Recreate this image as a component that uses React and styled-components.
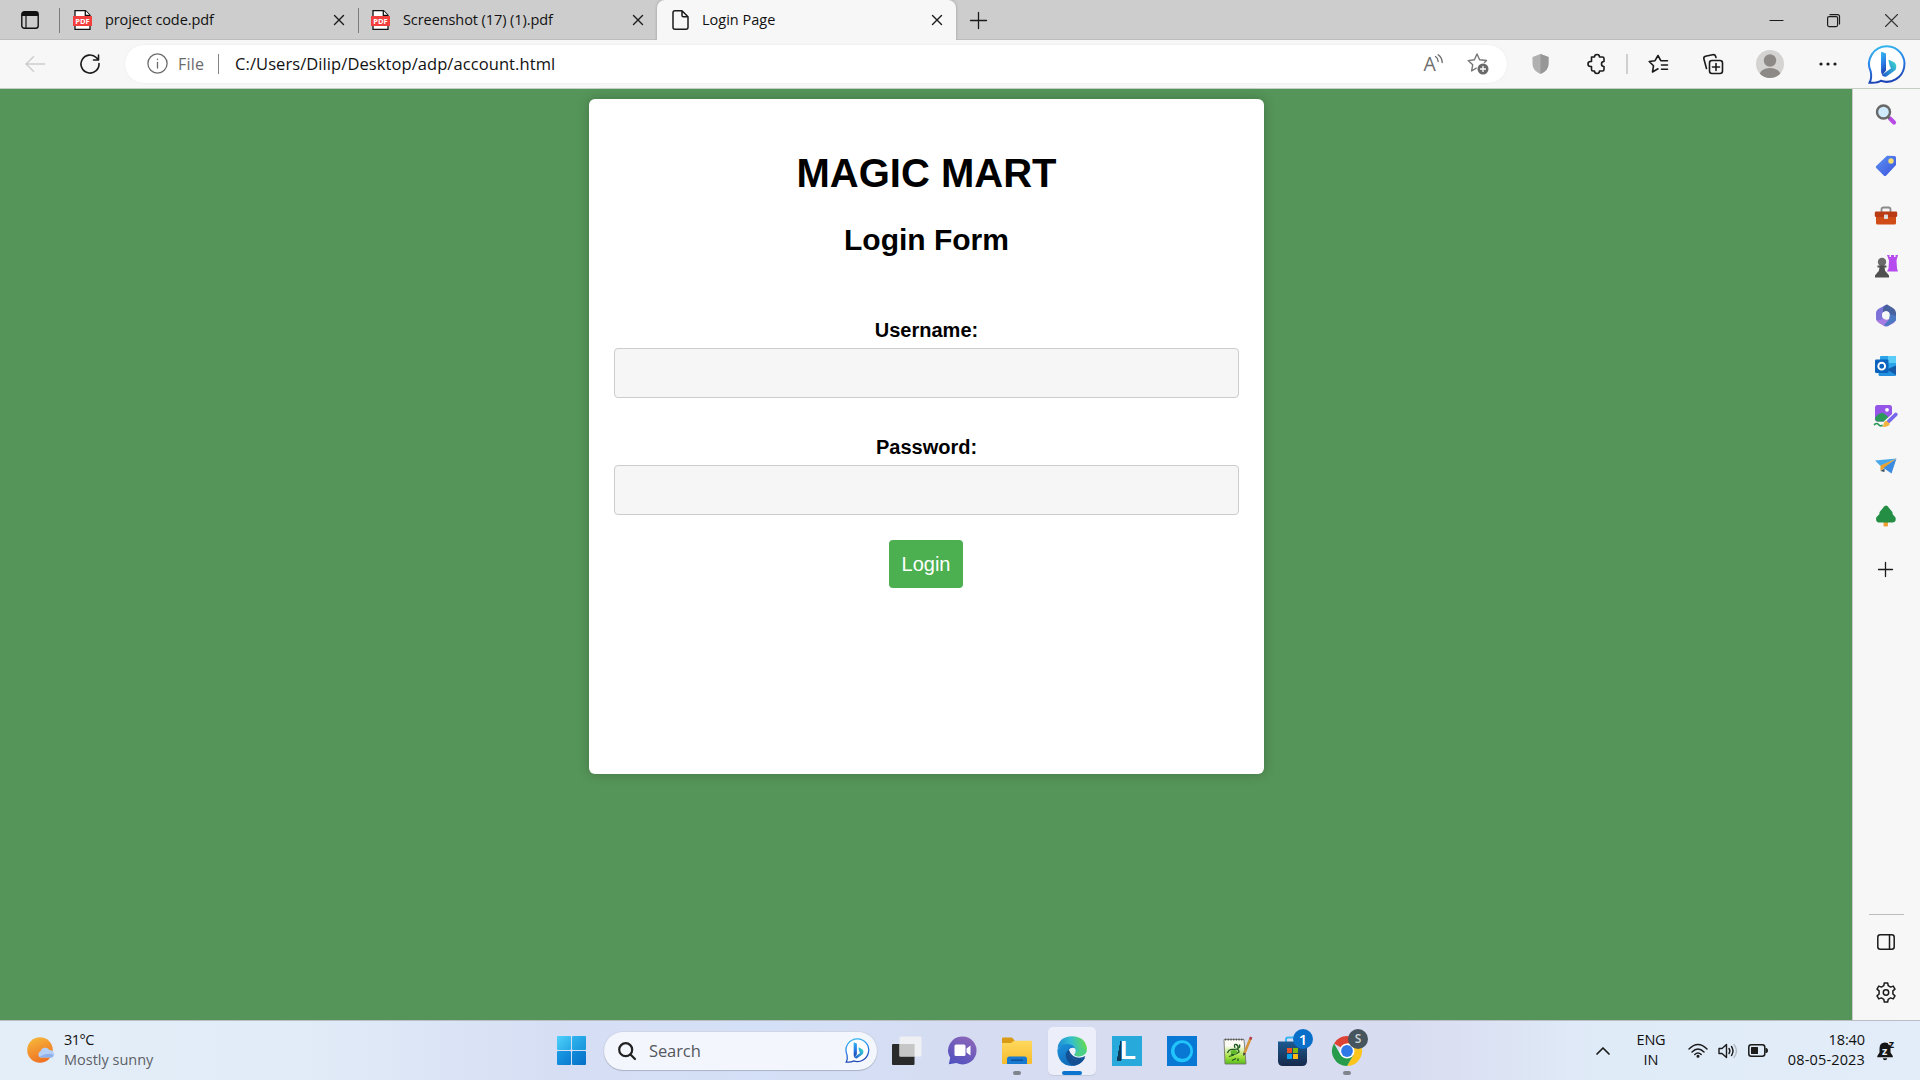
import React from "react";
import styled, { createGlobalStyle, css } from "styled-components";

const Global = createGlobalStyle`
  * { box-sizing: border-box; }
  html, body { margin: 0; padding: 0; overflow: hidden; }
  body { font-family: "Open Sans", "Noto Sans", sans-serif; color: #111; }
  svg { display: block; flex: none; overflow: visible; }
  button, input { font: inherit; }
`;

const Desktop = styled.div`
  width: 1920px;
  height: 1080px;
  display: flex;
  flex-direction: column;
  overflow: hidden;
  background: #f7f7f7;
`;

const Cell = styled.div`
  flex: none;
  width: ${(p) => (p.$w ? `${p.$w}px` : "100%")};
  height: ${(p) => (p.$h ? `${p.$h}px` : "100%")};
  display: flex;
  align-items: center;
  justify-content: center;
`;

const Spacer = styled.div`
  flex: 1;
`;

const Label = styled.span`
  white-space: nowrap;
  font-size: ${(p) => p.$size}px;
  letter-spacing: ${(p) => p.$track || 0}px;
  color: ${(p) => p.$color || "#111"};
  line-height: 20px;
`;

/* ---------- tab strip ---------- */

const TabStrip = styled.header`
  height: 40px;
  flex: none;
  display: flex;
  background: #cdcdcd;
  box-shadow: inset 0 -1px 0 #bdbdbd;
`;

const TabRule = styled.div`
  width: 1px;
  height: 25px;
  margin-top: 8px;
  background: #7c7c7c;
`;

const Tab = styled.div`
  width: ${(p) => p.$w}px;
  padding-left: ${(p) => p.$pad}px;
  display: flex;
  align-items: center;
  gap: 13px;
  ${(p) =>
    p.$active &&
    css`
      background: #f7f7f7;
      border-radius: 8px 8px 0 0;
      box-shadow: 0 0 3px rgba(0, 0, 0, 0.25);
      clip-path: inset(0 -3px 0 -3px);
    `}
`;

const PdfBox = styled.div`
  position: relative;
  width: 19px;
  height: 20px;
`;

const PdfTag = styled.span`
  position: absolute;
  left: 0;
  top: 6px;
  width: 19px;
  height: 10px;
  background: #f2403f;
  color: #fff;
  font: bold 7.5px/10px "Open Sans", sans-serif;
  text-align: center;
`;

/* ---------- toolbar ---------- */

const Toolbar = styled.nav`
  height: 49px;
  flex: none;
  display: flex;
  align-items: center;
  background: #f7f7f7;
  border-bottom: 1px solid #c3cfc3;
`;

const AddressBar = styled.div`
  width: 1382px;
  height: 38px;
  margin-left: 14px;
  margin-bottom: 1px;
  padding-left: 22px;
  display: flex;
  align-items: center;
  background: #fff;
  border-radius: 19px;
  box-shadow: 0 0 2px rgba(0, 0, 0, 0.08);
`;

const FileLabel = styled(Label)`
  width: 40px;
  margin-left: 10px;
`;

const Rule = styled.div`
  width: ${(p) => p.$w || 1}px;
  height: 20px;
  background: ${(p) => p.$color};
`;

const Url = styled(Label)`
  margin-left: 16px;
`;

/* ---------- page ---------- */

const Main = styled.div`
  height: 931px;
  flex: none;
  display: flex;
`;

const Page = styled.main`
  width: 1852px;
  padding-top: 10px;
  display: flex;
  justify-content: center;
  align-items: flex-start;
  background: #559559;
`;

const Card = styled.form`
  width: 675px;
  height: 675px;
  margin-left: 1px;
  padding: 51px 25px 0;
  display: flex;
  flex-direction: column;
  align-items: center;
  background: #fff;
  border-radius: 6px;
  box-shadow: 0 0 12px rgba(0, 0, 0, 0.22);
  font-family: "Liberation Sans", Arial, sans-serif;
  color: #000;
`;

const Brand = styled.h1`
  margin: 0 0 27px;
  font-size: 40px;
  line-height: 46px;
`;

const Title = styled.h2`
  margin: 0 0 62px;
  font-size: 30px;
  line-height: 34px;
`;

const Field = styled.label`
  width: 100%;
  margin-bottom: ${(p) => p.$after}px;
  display: flex;
  flex-direction: column;
  align-items: center;
  gap: 6px;
  font-size: 20px;
  line-height: 23px;
  font-weight: bold;
`;

const TextInput = styled.input`
  width: 100%;
  height: 50px;
  border: 1px solid #ccc;
  border-radius: 4px;
  background: #f6f6f6;
  outline: none;
`;

const Submit = styled.button`
  width: 74px;
  height: 48px;
  margin-right: 1px;
  padding: 0;
  border: 0;
  border-radius: 4px;
  background: #4caf50;
  color: #fff;
  font-size: 20px;
`;

/* ---------- sidebar ---------- */

const Sidebar = styled.aside`
  width: 68px;
  display: flex;
  flex-direction: column;
  align-items: center;
  background: #f7f7f7;
  border-left: 1px solid #c9ccc9;
  padding: 0 2px 4px 0;
`;

const SideRule = styled.div`
  width: 35px;
  height: 1px;
  margin-left: 1px;
  background: #bcbcbc;
`;

/* ---------- taskbar ---------- */

const Taskbar = styled.footer`
  height: 60px;
  flex: none;
  display: flex;
  align-items: center;
  border-top: 1px solid #b9bdc4;
  background: linear-gradient(90deg, #e3eef8 0, #e2ecf8 300px, #d6def4 560px, #d4e0f7 760px, #d6dcf1 1000px, #d8dcf0 1400px, #e0ebf8 1600px, #e2edf9 1920px);
`;

const Weather = styled.div`
  width: 557px;
  padding-left: 27px;
  display: flex;
  align-items: center;
  gap: 9px;
`;

const Stack = styled.div`
  width: ${(p) => (p.$w ? `${p.$w}px` : "auto")};
  margin-bottom: 2px;
  display: flex;
  flex-direction: column;
  align-items: ${(p) => p.$align || "flex-start"};
`;

const StartButton = styled.div`
  width: 29px;
  height: 29px;
  margin-right: 18px;
  display: grid;
  grid-template-columns: 1fr 1fr;
  gap: 1px;
`;

const Pane = styled.i`
  border-radius: 1px;
  background: ${(p) => p.$fill};
`;

const SearchBox = styled.div`
  width: 273px;
  height: 38px;
  padding: 0 7px 0 14px;
  display: flex;
  align-items: center;
  background: #f3f6fd;
  border-radius: 19px;
  box-shadow: 0 1px 1px #aab3c6, 0 0 0 1px #cfd6e8;
`;

const SearchText = styled(Label)`
  flex: 1;
  margin-left: 13px;
`;

const AppSlot = styled.div`
  position: relative;
  width: 48px;
  height: 48px;
  margin-right: 7px;
  display: flex;
  align-items: center;
  justify-content: center;
  border-radius: 5px;
  ${(p) =>
    p.$active &&
    css`
      background: #eceff9;
      box-shadow: 0 1px 1px #c3c9da;
    `}
`;

const Running = styled.i`
  position: absolute;
  bottom: 0;
  left: 50%;
  width: ${(p) => p.$w}px;
  height: 4px;
  margin-left: ${(p) => -p.$w / 2}px;
  border-radius: 2px;
  background: ${(p) => p.$color};
`;

const Badge = styled.span`
  position: absolute;
  right: 3px;
  top: 2px;
  width: 20px;
  height: 20px;
  border-radius: 50%;
  background: ${(p) => p.$bg};
  color: ${(p) => p.$color};
  font-size: ${(p) => p.$size}px;
  font-weight: 600;
  line-height: 20px;
  text-align: center;
`;

const LTile = styled.div`
  width: 30px;
  height: 30px;
  background: linear-gradient(100deg, transparent 0 20%, #0d3b57 21% 38%, transparent 39%) 3px 5px / 22px 20px no-repeat, #27a9dc;
  color: #fff;
  font: bold 26px/28px "Liberation Sans", sans-serif;
  text-align: center;
  padding-left: 2px;
`;

const DateStack = styled(Stack)`
  margin-left: 8px;
`;

/* ---------- icons ---------- */

const Line = ({ w, h, sw = 1.5, c = "#1b1b1b", children, vb }) => (
  <svg width={w} height={h} viewBox={vb || `0 0 ${w} ${h}`} fill="none" stroke={c} strokeWidth={sw} strokeLinecap="round" strokeLinejoin="round">
    {children}
  </svg>
);

const CloseIcon = ({ s = 10, sw = 1.4, c }) => (
  <Line w={s} h={s} sw={sw} c={c}>
    <path d={`M.5 .5 ${s - 0.5} ${s - 0.5}M${s - 0.5} .5 .5 ${s - 0.5}`} />
  </Line>
);

const PdfIcon = () => (
  <PdfBox>
    <svg width="19" height="20" fill="#fff" stroke="#111" strokeWidth="1.3">
      <path d="M2 .7H12.5L17 5.2V19.3H2Z" />
      <path d="M12.3 .7V5.4H17" />
    </svg>
    <PdfTag>PDF</PdfTag>
  </PdfBox>
);

const BingIcon = ({ w, h, id }) => (
  <svg width={w} height={h} viewBox="0 0 38 39">
    <defs>
      <linearGradient id={id} x1="0" y1="0" x2="0.2" y2="1">
        <stop offset="0" stopColor="#35bdf0" />
        <stop offset=".55" stopColor="#2a7fe6" />
        <stop offset="1" stopColor="#1c44b4" />
      </linearGradient>
      <linearGradient id={`${id}b`} x1="0" y1="1" x2="1" y2="0">
        <stop offset="0" stopColor="#1f55d0" />
        <stop offset="1" stopColor="#3fe0d0" />
      </linearGradient>
    </defs>
    <path d="M19 1.2A17.8 17.8 0 1 1 12.8 35.8C10.500 37.500 6 38 1.500 37.700C3 35 3.600 31 2.700 26.500A17.800 17.800 0 0 1 19 1.200Z" fill="#fff" stroke={`url(#${id})`} strokeWidth="2" />
    <path d="M13 7.500Q13 6.500 14 6.900L17 8Q18 8.400 18 9.500V25.500L14.300 30Q13 28.500 13 26Z" fill={`url(#${id})`} />
    <path d="M20.500 15.500Q20.500 14.500 21.500 15L26.500 17.500Q29.500 20 27.500 25L18.500 31.500Q15.500 32.500 13.800 30L23 23.300Q21 20 20.500 15.500Z" fill={`url(#${id}b)`} />
  </svg>
);

const ReadAloudIcon = () => (
  <svg width="20" height="20" viewBox="0 0 20 20" fill="none" stroke="#6e6e6e" strokeWidth="1.4" strokeLinecap="round">
    <text x="-.5" y="17" fill="#6e6e6e" stroke="none" fontSize="19.500" fontFamily="Open Sans, sans-serif">A</text>
    <path d="M11.500 2.500Q14 4 14.200 7.500M14.200 .8Q18 3.500 18.200 8.500" />
  </svg>
);

const AddFavouriteIcon = () => (
  <svg width="22" height="22" viewBox="0 0 22 22">
    <path d="M9.200 15.200 4.600 18 5.700 11.800 1.200 7.600 7.400 6.700 10 1 12.600 6.700 19.500 7.500 17.500 9.500" fill="none" stroke="#767676" strokeWidth="1.400" strokeLinejoin="round" strokeLinecap="round" />
    <circle cx="16" cy="16" r="5.500" fill="#6a6a6a" />
    <path d="M13 16H19M16 13V19" stroke="#fff" strokeWidth="1.300" />
  </svg>
);

const SearchColorIcon = () => (
  <svg width="22" height="22" viewBox="0 0 22 22">
    <path d="M15 14.500 19 18.500" stroke="#b84be6" strokeWidth="4.200" strokeLinecap="round" />
    <path d="M12.500 12.500 14.500 14.500" stroke="#686868" strokeWidth="2.200" />
    <circle cx="8.500" cy="8" r="6.500" fill="#cfeafc" stroke="#686868" strokeWidth="2.400" />
  </svg>
);

const TagIcon = () => (
  <svg width="22" height="22" viewBox="0 0 22 22">
    <defs>
      <linearGradient id="tag" x1="0" y1="0" x2="1" y2="1">
        <stop offset="0" stopColor="#5c95f3" />
        <stop offset="1" stopColor="#3c51dc" />
      </linearGradient>
    </defs>
    <path d="M12 .8 19.500 1Q21 1 21 2.500V10L11 20.700Q10 21.500 9 20.700L1.200 13Q.3 12 1.200 11Z" fill="url(#tag)" />
    <circle cx="16" cy="6" r="2.700" fill="#f7dc70" />
  </svg>
);

const ToolboxIcon = () => (
  <svg width="24" height="20" viewBox="0 0 24 20">
    <path d="M7.500 6V3.500Q7.500 1.500 9.500 1.500H14.500Q16.500 1.500 16.500 3.500V6" fill="none" stroke="#8a8a8a" strokeWidth="1.800" />
    <path d="M2 9H22V17Q22 18.500 20.500 18.500H3.500Q2 18.500 2 17Z" fill="#d14d17" />
    <rect x=".8" y="5.500" width="22.400" height="5.500" rx="1.300" fill="#b93c14" />
    <rect x="10" y="8.500" width="4" height="4.500" rx=".8" fill="#ddd" />
  </svg>
);

const GamesIcon = () => (
  <svg width="24" height="24" viewBox="0 0 24 24">
    <path d="M13 1H15.500V3H17V1H20V3H21.500V1H24L22.500 6.500 23 14.500 24 17.500H13L14.500 14.500 15 6.500Z" fill="#b64cf0" />
    <circle cx="8" cy="8" r="4.200" fill="#6a6a6a" />
    <path d="M3.500 11.500H12.500V13.500H10.500Q10.500 17 13 19L15 21.500V23.500H1V21.500L3 19Q5.500 17 5.500 13.500H3.500Z" fill="#505050" />
  </svg>
);

const OfficeIcon = () => (
  <svg width="22" height="23" viewBox="0 0 22 23">
    <path d="M12 .5 5 4Q1 6 1 9V14.500Q1 17 4 18L9 15Q7 14 7 11Q7 8 10 7L16 4Z" fill="#7d72d8" />
    <path d="M12 .5 18 4Q21 6 21 8.500V15Q21 17 19 18L14.500 15V10Q14.500 7.500 11 7L8 8V4Q8 2 12 .5Z" fill="#48619f" />
    <path d="M2 16.500 9 14.800Q12 17 14.500 14.500L20.500 16.500Q20 18.500 17 20L13 22Q11 23 9 22L4 19Q2.500 18 2 16.500Z" fill="#a77be2" />
    <path d="M14.500 15V10L21 12V15Q21 17 19 18L13 22Q10 22.500 9 21Z" fill="#4c79c4" />
    <circle cx="11" cy="11.200" r="3.700" fill="#f7f7f7" />
  </svg>
);

const OutlookIcon = () => (
  <svg width="22" height="22" viewBox="0 0 22 22">
    <rect x="5" y="1" width="16" height="15" rx="1" fill="#2aa3e8" />
    <path d="M13 1H20Q21 1 21 2V8H13Z" fill="#58ccf6" />
    <path d="M3.500 15 12 14 21 10.500V20Q21 21 20 21H5Q3.500 21 3.500 19.500Z" fill="#2590df" />
    <path d="M12 14.500 21 10.500V20Z" fill="#145aa8" />
    <rect x="0" y="4.500" width="13.500" height="13.500" rx="1.300" fill="#0b63bd" />
    <circle cx="6.700" cy="11.200" r="3.400" fill="none" stroke="#fff" strokeWidth="1.900" />
  </svg>
);

const DesignerIcon = () => (
  <svg width="25" height="24" viewBox="0 0 25 24">
    <rect x="2" y="1" width="17" height="16.500" rx="2.500" fill="#9456e6" />
    <circle cx="14" cy="5.800" r="1.900" fill="#fff" />
    <path d="M2 14Q8 6 13 11L16 14V17.500H4Q2 17 2 14Z" fill="#2b9a59" />
    <path d="M1.500 20.500Q4 18.500 5.500 20.500T9 21.500" stroke="#2b9a59" strokeWidth="1.700" fill="none" strokeLinecap="round" />
    <path d="M23 10.500 14 18.500" stroke="#f7f7f7" strokeWidth="6" strokeLinecap="round" />
    <path d="M22.800 10.500 15.500 17.500" stroke="#7668ea" strokeWidth="3.800" strokeLinecap="round" />
    <path d="M13.200 16.500 17 20Q15 23.500 9 23Q11 22 10.500 20Q11 17.500 13.200 16.500Z" fill="#f2b53d" />
  </svg>
);

const DropIcon = () => (
  <svg width="22" height="16" viewBox="0 0 22 16">
    <path d="M0 2.500 21.500 .5 5.500 8Z" fill="#49a8ec" />
    <path d="M21.500 .5 5.500 7.500V13L8 11Z" fill="#e9a12f" />
    <path d="M5.500 13 9.500 10.500V14Z" fill="#354d63" />
    <path d="M21.500 .5 8.500 10 16.500 15.500Z" fill="#3d8be0" />
  </svg>
);

const TreeIcon = () => (
  <svg width="22" height="22" viewBox="0 0 22 22">
    <path d="M8.500 15H13V20.500Q13 21.500 12 21.500H9.500Q8.500 21.500 8.500 20.500Z" fill="#eda132" />
    <path d="M11 .5Q13 .5 14 3L17 6.500Q18 8 17.500 9L20.500 12.500Q21.500 17 18 17.500H4Q.5 17 1.200 12.500L4.500 9Q4 8 5 6.500L8 3Q9 .5 11 .5Z" fill="#248e44" />
  </svg>
);

const GearIcon = () => (
  <Line w={20} h={21} sw={1.500}>
    <path d="M8.300 1H11.700L12.200 3.700 14.600 5.100 17.200 4.100 19 7.100 16.900 8.900V12L19 13.900 17.200 16.900 14.600 15.900 12.200 17.300 11.700 20H8.300L7.800 17.300 5.400 15.900 2.800 16.900 1 13.900 3.100 12V8.900L1 7.100 2.800 4.100 5.400 5.100 7.800 3.700Z" />
    <circle cx="10" cy="10.500" r="2.700" />
  </Line>
);

const SunIcon = () => (
  <svg width="28" height="28" viewBox="0 0 28 28">
    <defs>
      <linearGradient id="sun" x1=".3" y1="0" x2=".7" y2="1">
        <stop offset="0" stopColor="#f6b53a" />
        <stop offset="1" stopColor="#ee6c22" />
      </linearGradient>
    </defs>
    <circle cx="13" cy="13" r="12.800" fill="url(#sun)" />
    <path d="M13.500 20.500A3.300 3.300 0 0 1 13.500 14.300A5 5 0 0 1 22.500 13Q26 13 27 16Q28 19.500 25 20.500Z" fill="#b7d0f7" />
    <path d="M13 19.500Q19 15.500 26.500 17.500Q26 20.500 24.500 20.500H13.500Z" fill="#8fb2ec" />
  </svg>
);

const TaskViewIcon = () => (
  <svg width="30" height="29" viewBox="0 0 30 29">
    <rect x="0" y="8" width="22.500" height="21" rx="1" fill="#2a2a2a" />
    <rect x="7.500" y=".5" width="22" height="20" rx="1" fill="#f1f1f3" fillOpacity=".92" />
    <rect x="7.500" y="8" width="15" height="12.500" fill="#c6c6c6" />
  </svg>
);

const ChatIcon = () => (
  <svg width="29" height="29" viewBox="0 0 29 29">
    <defs>
      <linearGradient id="chat" x1="0" y1="1" x2=".6" y2="0">
        <stop offset="0" stopColor="#4c4fc0" />
        <stop offset="1" stopColor="#8865b8" />
      </linearGradient>
    </defs>
    <path d="M14.500 .5A14 14 0 1 1 8.500 27.100L.8 28.200 2.200 21.800A14 14 0 0 1 14.500 .5Z" fill="url(#chat)" />
    <rect x="6.500" y="8.500" width="11" height="11.500" rx="1.500" fill="#fff" />
    <path d="M18.500 12.500 22.500 9.500V19.500L18.500 16.500Z" fill="#fff" />
  </svg>
);

const FolderIcon = () => (
  <svg width="30" height="28" viewBox="0 0 30 28">
    <defs>
      <linearGradient id="folder" x1="0" y1="0" x2="0" y2="1">
        <stop offset="0" stopColor="#ffd95e" />
        <stop offset="1" stopColor="#f6bb2c" />
      </linearGradient>
    </defs>
    <path d="M0 1.500Q0 .5 1 .5H10L13 4V8H0Z" fill="#d99a16" />
    <path d="M0 6H9L12 3.700H29Q30 3.700 30 4.700V26Q30 27 29 27H1Q0 27 0 26Z" fill="url(#folder)" />
    <path d="M5 27V22Q5 19.500 7.500 19.500H22.500Q25 19.500 25 22V27Z" fill="#1779cf" />
    <path d="M9 23.200H21" stroke="#0b4c94" strokeWidth="1.400" />
  </svg>
);

const EdgeIcon = () => (
  <svg width="30" height="30" viewBox="0 0 30 30">
    <defs>
      <linearGradient id="e1" x1="0" y1=".6" x2="1" y2=".4">
        <stop offset="0" stopColor="#1b86d2" />
        <stop offset=".5" stopColor="#32bdd2" />
        <stop offset="1" stopColor="#66dc4a" />
      </linearGradient>
      <linearGradient id="e2" x1="0" y1="0" x2=".7" y2="1">
        <stop offset="0" stopColor="#1b94dd" />
        <stop offset="1" stopColor="#1163b2" />
      </linearGradient>
    </defs>
    <path d="M.5 13Q1.500 .5 15 .2Q28.500 .8 30 12.500Q30 20 22 20.500Q17.500 20.500 17 18.500Q19 17 18.500 14Q17 9 10.500 9Q3 9 .5 13Z" fill="url(#e1)" />
    <path d="M.3 14Q3 7.500 10.500 8Q17 8.500 18.500 13Q14 10.500 12 14Q9.500 20 15 24.500Q20 28 27.500 22.500Q23 30 14.500 30Q1 29 .3 14Z" fill="url(#e2)" />
    <path d="M12 13.500Q8 16 9 21Q10.500 27.500 17 29.800Q24 28.500 28 22Q22 25 17 22.500Q11.500 19.500 12 13.500Z" fill="#124f93" />
    <path d="M12 14Q14 10.800 17.500 12Q19.500 14.500 17 18.500Q17.500 20.500 22 20.500L27 18Q29 19 28 21.500Q24 25.500 17.500 23Q11.500 20 12 14Z" fill="#eceff9" fillOpacity=".95" stroke="none" />
    <path d="M17 23Q11 20 12 14Q14 19.500 19 21.300Q24 22.500 28.300 20Q28 23 25 24Q21 25 17 23Z" fill="#124f93" />
    <path d="M18 17.500Q17 20.500 22 20.500Q28 20 29.500 15L26 12Z" fill="#4ccf86" />
  </svg>
);

const AlexaIcon = () => (
  <svg width="30" height="30" viewBox="0 0 30 30">
    <rect width="30" height="30" fill="#0878d4" />
    <path d="M15 25.500V23.500A8.600 8.600 0 1 0 12 22.800Q15 23.500 15 25.500A10.300 10.300 0 0 1 15 4.900A10.300 10.300 0 0 1 15 25.500Z" fill="#22c5fb" stroke="#22c5fb" strokeWidth="1.400" />
  </svg>
);

const NotepadIcon = () => (
  <svg width="30" height="30" viewBox="0 0 30 30">
    <defs>
      <linearGradient id="np" x1="0" y1="0" x2="0" y2="1">
        <stop offset=".25" stopColor="#fbfbf4" />
        <stop offset=".7" stopColor="#a6e040" />
        <stop offset="1" stopColor="#55bd1b" />
      </linearGradient>
    </defs>
    <path d="M2 3.500H22L24 28H3Z" fill="url(#np)" stroke="#77796d" strokeWidth=".9" />
    <path d="M3 3.500H22" stroke="#555" strokeWidth="2.200" strokeDasharray="1.200 1.500" />
    <path d="M5.500 17Q7 12.500 12 13.500Q17 12 17 16Q14 19 9 18M7 20.500 12 19M13 12Q11.500 8 14 8.500T16 12.500Q18.500 11 17.500 8.500M10 24.500 14 22.500M16 25V22.500" fill="none" stroke="#1e5b20" strokeWidth="1.300" />
    <ellipse cx="12" cy="16" rx="3.500" ry="2" fill="#63b92c" />
    <path d="M28.500 2.500 22.500 17" stroke="#d5953c" strokeWidth="2.600" />
    <path d="M29.200 1 28.200 3.500" stroke="#b3414b" strokeWidth="2.600" />
    <path d="M21.300 16.500 23.700 17.500 21.300 20.300Z" fill="#333" />
  </svg>
);

const StoreIcon = () => (
  <svg width="29" height="30" viewBox="0 0 29 30">
    <defs>
      <linearGradient id="store" x1="0" y1="0" x2="0" y2="1">
        <stop offset="0" stopColor="#1d5a92" />
        <stop offset="1" stopColor="#16294a" />
      </linearGradient>
    </defs>
    <path d="M8 6V3.500Q8 1.500 10 1.500H19Q21 1.500 21 3.500V6" fill="none" stroke="#39b5f0" strokeWidth="2" />
    <path d="M0 5.500H29V25Q29 30 24 30H5Q0 30 0 25Z" fill="url(#store)" />
    <rect x="9" y="12" width="5" height="5" fill="#ef5326" />
    <rect x="15" y="12" width="5" height="5" fill="#80bb0a" />
    <rect x="9" y="18" width="5" height="5" fill="#08a5ee" />
    <rect x="15" y="18" width="5" height="5" fill="#fdb913" />
  </svg>
);

const ChromeIcon = () => (
  <svg width="30" height="30" viewBox="0 0 30 30">
    <path d="M15 15 2 7.500A15 15 0 0 1 28 7.500H15Z" fill="#dc4334" />
    <path d="M15 7.500H28A15 15 0 0 1 15 30L21.500 18.800Z" fill="#fbc51d" />
    <path d="M21.500 18.800 15 30A15 15 0 0 1 2 7.500L8.500 18.800Z" fill="#259b4b" />
    <circle cx="15" cy="15" r="7.500" fill="#fff" />
    <circle cx="15" cy="15" r="5.900" fill="#2f78e8" />
  </svg>
);

const BellIcon = () => (
  <svg width="18" height="20" viewBox="0 0 18 20">
    <path d="M8 1.500Q13.500 1.500 13.500 7.500V11.500L15.800 15V16.200H.3V15L2.500 11.500V7.500Q2.500 1.500 8 1.500Z" fill="#151515" />
    <path d="M5.800 17.300H10.200Q10 19.300 8 19.300T5.800 17.300Z" fill="#151515" />
    <path d="M11 0H18V7H13V3.500H11Z" fill="#e2edf9" />
    <text x="5" y="13.500" fontSize="11" fontWeight="700" fill="#e2edf9" fontFamily="Open Sans, sans-serif">z</text>
    <text x="11.700" y="7" fontSize="11" fontWeight="700" fill="#151515" fontFamily="Open Sans, sans-serif">z</text>
  </svg>
);

const sideItems = [
  [51, <SearchColorIcon />],
  [51, <TagIcon />],
  [50, <ToolboxIcon />],
  [50, <GamesIcon />],
  [49, <OfficeIcon />],
  [51, <OutlookIcon />],
  [50, <DesignerIcon />],
  [50, <DropIcon />],
  [50, <TreeIcon />],
  [56, <Line w={15} h={15} sw={1.300}><path d="M7.500 .5V14.500M.5 7.500H14.500" /></Line>],
];

export default function App() {
  return (
    <Desktop>
      <Global />
      <TabStrip>
        <Cell $w={59}>
          <svg width="18" height="18" viewBox="0 0 18 18">
            <rect x=".8" y=".8" width="16.400" height="16.400" rx="2.500" fill="none" stroke="#111" strokeWidth="1.400" />
            <path d="M.8 5V3Q.8 .8 3 .8H15Q17.200 .8 17.200 3V5Z" fill="#111" />
            <path d="M5 5V17" stroke="#111" strokeWidth="1.200" />
          </svg>
        </Cell>
        <TabRule />
        <Tab $w={298} $pad={13}>
          <PdfIcon />
          <Label $size={14.500} $track={-0.100}>project code.pdf</Label>
          <Spacer />
          <Cell $w={38}><CloseIcon /></Cell>
        </Tab>
        <TabRule />
        <Tab $w={298} $pad={12}>
          <PdfIcon />
          <Label $size={14.500} $track={-0.080}>Screenshot (17) (1).pdf</Label>
          <Spacer />
          <Cell $w={38}><CloseIcon /></Cell>
        </Tab>
        <Tab $w={299} $pad={15} $active>
          <Line w={17} h={20} sw={1.500}>
            <path d="M3 .8H10L16 6.800V17.200Q16 19.200 14 19.200H3Q1 19.200 1 17.200V2.800Q1 .8 3 .8ZM10 .8V5.500Q10 6.800 11.300 6.800H16" />
          </Line>
          <Label $size={14.500}>Login Page</Label>
          <Spacer />
          <Cell $w={38}><CloseIcon /></Cell>
        </Tab>
        <Cell $w={44}>
          <Line w={17} h={17} sw={1.300}><path d="M8.500 .5V16.500M.5 8.500H16.500" /></Line>
        </Cell>
        <Spacer />
        <Cell $w={57}><Line w={13} h={1} sw={1.200}><path d="M0 .5H13" /></Line></Cell>
        <Cell $w={57}>
          <Line w={13} h={13} sw={1.200}>
            <rect x=".6" y="2.600" width="10" height="10" rx="1.500" />
            <path d="M3 .6H10.500Q12.500 .6 12.500 2.600V10" />
          </Line>
        </Cell>
        <Cell $w={58}><CloseIcon s={13} sw={1.100} c="#333" /></Cell>
      </TabStrip>

      <Toolbar>
        <Cell $w={69}>
          <Line w={20} h={16} sw={1.400} c="#cdcdcd"><path d="M19.500 8H1M8.500 .8 1 8 8.500 15.200" /></Line>
        </Cell>
        <Cell $w={42}>
          <Line w={20} h={20} sw={1.600}>
            <path d="M19 9.500A9 9 0 1 1 16.500 3.800L18.500 6M18.500 1V6H13.500" />
          </Line>
        </Cell>
        <AddressBar>
          <Line w={21} h={21} sw={1.300} c="#6b6b6b">
            <circle cx="10.500" cy="10.500" r="9.600" />
            <path d="M10.500 9.500V15M10.500 6.200V6.500" />
          </Line>
          <FileLabel $size={16} $track={0.200} $color="#6b6b6b">File</FileLabel>
          <Rule $color="#858585" />
          <Url $size={16.500} $track={0.080}>C:/Users/Dilip/Desktop/adp/account.html</Url>
          <Spacer />
          <Cell $w={31}><ReadAloudIcon /></Cell>
          <Cell $w={58}><AddFavouriteIcon /></Cell>
        </AddressBar>
        <Cell $w={67}>
          <svg width="17" height="20" viewBox="0 0 17 20">
            <path d="M8.500 0 16.500 3V10Q16.500 16.500 8.500 20Q.5 16.500 .5 10V3Z" fill="#b0b0b0" />
            <path d="M8.500 0 16.500 3V10Q16.500 16.500 8.500 20Z" fill="#979797" />
          </svg>
        </Cell>
        <Cell $w={44}>
          <Line w={19} h={20} sw={1.600}>
            <path d="M4.500 3H7.500A2.500 2.500 0 0 1 12.500 3H15.500Q17 3 17 4.500V7.500A2.500 2.500 0 0 0 17 12.500V15.500Q17 17 15.500 17H12.500A2.500 2.500 0 0 1 7.500 17H6Q4.500 17 4.500 15.500V12.500H3.500A2.500 2.500 0 0 1 3.500 7.500H4.500Z" />
          </Line>
        </Cell>
        <Cell $w={17}><Rule $w={2} $color="#cfcfcf" /></Cell>
        <Cell $w={46}>
          <Line w={21} h={20} sw={1.600}>
            <path d="M10 14.800 4.500 18 5.500 11.800 1.200 7.500 7 6.700 10 1.500 12.800 6.700H19.500M13.500 11H19.500M13.500 15.300H19.500" />
          </Line>
        </Cell>
        <Cell $w={64}>
          <Line w={20} h={20} sw={1.600}>
            <rect x="6.500" y="6.500" width="13" height="13" rx="2.500" />
            <path d="M13 9.500V16.500M9.500 13H16.500M3.500 14.500 .9 5Q.3 2.800 2.500 2.200L9.500 .7Q12 .2 12.700 2.500L13 3.500" />
          </Line>
        </Cell>
        <Cell $w={50}>
          <svg width="28" height="28" viewBox="0 0 28 28">
            <defs><clipPath id="av"><circle cx="14" cy="14" r="14" /></clipPath></defs>
            <g clipPath="url(#av)">
              <rect width="28" height="28" fill="#d5d3d1" />
              <circle cx="14" cy="10.500" r="6.200" fill="#8d8986" />
              <ellipse cx="14" cy="25" rx="10.500" ry="7" fill="#8d8986" />
            </g>
          </svg>
        </Cell>
        <Cell $w={65}>
          <svg width="18" height="4" fill="#1b1b1b"><circle cx="2" cy="2" r="1.600" /><circle cx="9" cy="2" r="1.600" /><circle cx="16" cy="2" r="1.600" /></svg>
        </Cell>
        <Cell $w={53}><BingIcon w={38} h={39} id="bingTop" /></Cell>
      </Toolbar>

      <Main>
        <Page>
          <Card onSubmit={(e) => e.preventDefault()}>
            <Brand>MAGIC MART</Brand>
            <Title>Login Form</Title>
            <Field $after={38}>Username:<TextInput type="text" /></Field>
            <Field $after={25}>Password:<TextInput type="password" /></Field>
            <Submit type="submit">Login</Submit>
          </Card>
        </Page>
        <Sidebar>
          {sideItems.map(([h, icon], i) => (
            <Cell key={i} $h={h}>{icon}</Cell>
          ))}
          <Spacer />
          <SideRule />
          <Cell $h={54}>
            <Line w={18} h={16} sw={1.500}><rect x=".8" y=".8" width="16.400" height="14.400" rx="2.500" /><path d="M12.500 .8V15.200" /></Line>
          </Cell>
          <Cell $h={47}><GearIcon /></Cell>
        </Sidebar>
      </Main>

      <Taskbar>
        <Weather>
          <SunIcon />
          <Stack>
            <Label $size={14.500} $track={-0.500}>31°C</Label>
            <Label $size={14.500} $color="#5d6166">Mostly sunny</Label>
          </Stack>
        </Weather>
        <StartButton>
          <Pane $fill="linear-gradient(135deg,#4fd0fb,#25a8e6)" />
          <Pane $fill="linear-gradient(135deg,#30b4ee,#1795dc)" />
          <Pane $fill="linear-gradient(135deg,#1a9ce4,#0b7bd0)" />
          <Pane $fill="linear-gradient(135deg,#128cda,#0570c6)" />
        </StartButton>
        <SearchBox>
          <Line w={18} h={18} sw={2.200} c="#222"><circle cx="7.700" cy="7.700" r="6.500" /><path d="M12.500 12.500 17 17" /></Line>
          <SearchText $size={16.500} $track={-0.100} $color="#54575e">Search</SearchText>
          <BingIcon w={25} h={25} id="bingTask" />
        </SearchBox>
        <Cell $w={6} $h={1} />
        <AppSlot><TaskViewIcon /></AppSlot>
        <AppSlot><ChatIcon /></AppSlot>
        <AppSlot><FolderIcon /><Running $w={8} $color="#80848c" /></AppSlot>
        <AppSlot $active><EdgeIcon /><Running $w={20} $color="#0a74cf" /></AppSlot>
        <AppSlot><LTile>L</LTile></AppSlot>
        <AppSlot><AlexaIcon /></AppSlot>
        <AppSlot><NotepadIcon /></AppSlot>
        <AppSlot><StoreIcon /><Badge $bg="#0a6fc8" $color="#fff" $size={15}>1</Badge></AppSlot>
        <AppSlot><ChromeIcon /><Badge $bg="#46545d" $color="#c9d1d5" $size={12}>S</Badge><Running $w={8} $color="#80848c" /></AppSlot>
        <Spacer />
        <Cell $w={46}><Line w={14} h={8} sw={1.700}><path d="M1 7 7 1 13 7" /></Line></Cell>
        <Stack $w={50} $align="center">
          <Label $size={14.500} $track={-0.200}>ENG</Label>
          <Label $size={14.500}>IN</Label>
        </Stack>
        <Cell $w={44}>
          <Line w={20} h={15} sw={1.500}>
            <path d="M1 6Q10 -3 19 6M4 9Q10 3 16 9M6.800 11.500Q10 8.500 13.200 11.500" />
            <circle cx="10" cy="13.200" r=".8" fill="#1b1b1b" />
          </Line>
        </Cell>
        <Cell $w={16}>
          <Line w={20} h={16} sw={1.400}>
            <path d="M1 5.500H4L8.500 1.500V14.500L4 10.500H1ZM11 5.500Q12.800 8 11 10.500M13.500 3.500Q16.500 8 13.500 12.500" />
            <path d="M16 1.500Q21 8 16 14.500" stroke="#b3bac2" />
          </Line>
        </Cell>
        <Cell $w={44}>
          <svg width="20" height="13" viewBox="0 0 20 13">
            <rect x=".8" y=".8" width="16" height="11.400" rx="2.500" fill="none" stroke="#1b1b1b" strokeWidth="1.500" />
            <rect x="3" y="3" width="7" height="7" rx=".5" fill="#1b1b1b" />
            <path d="M17.500 4H18.500Q20 4.500 20 6.500T18.500 9H17.500Z" fill="#1b1b1b" />
          </svg>
        </Cell>
        <DateStack $w={77} $align="flex-end">
          <Label $size={14.500} $track={-0.100}>18:40</Label>
          <Label $size={14.500} $track={0.150}>08-05-2023</Label>
        </DateStack>
        <Cell $w={42}><BellIcon /></Cell>
        <Cell $w={13} $h={1} />
      </Taskbar>
    </Desktop>
  );
}
